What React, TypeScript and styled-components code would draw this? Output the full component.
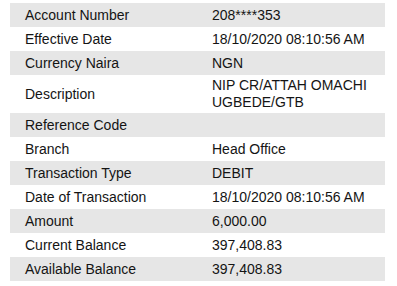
import styled, { createGlobalStyle } from 'styled-components'

const GlobalStyle = createGlobalStyle`
    body {
        margin: 0;
        background: #fff;
        font-family: 'Liberation Sans', Arial, sans-serif;
        color: #141414;
    }
`

type Detail = { label: string, value: string[] }

const details: Detail[] = [
    { label: 'Account Number', value: ['208****353'] },
    { label: 'Effective Date', value: ['18/10/2020 08:10:56 AM'] },
    { label: 'Currency Naira', value: ['NGN'] },
    { label: 'Description', value: ['NIP CR/ATTAH OMACHI', 'UGBEDE/GTB'] },
    { label: 'Reference Code', value: [] },
    { label: 'Branch', value: ['Head Office'] },
    { label: 'Transaction Type', value: ['DEBIT'] },
    { label: 'Date of Transaction', value: ['18/10/2020 08:10:56 AM'] },
    { label: 'Amount', value: ['6,000.00'] },
    { label: 'Current Balance', value: ['397,408.83'] },
    { label: 'Available Balance', value: ['397,408.83'] },
]

const Table = styled.div`
    display: flex;
    flex-direction: column;
    width: 375px;
    margin: 3px 0 0 10px;
    font-size: 14px;
`

const Row = styled.div<{ $striped: boolean }>`
    display: grid;
    grid-template-columns: 187px 1fr;
    align-items: center;
    min-height: 24px;
    padding: 2px 0;
    box-sizing: border-box;
    background: ${p => p.$striped ? '#e6e6e6' : 'transparent'};
`

const Label = styled.div`
    padding-left: 15px;
    line-height: 17px;
`

const Value = styled.div`
    padding-left: 15px;
    line-height: 17px;
`

export default function App() {
    return (
        <>
            <GlobalStyle />
            <Table>
                {details.map((d, i) => (
                    <Row key={d.label} $striped={i % 2 === 0}>
                        <Label>{d.label}</Label>
                        <Value>
                            {d.value.map(line => <div key={line}>{line}</div>)}
                        </Value>
                    </Row>
                ))}
            </Table>
        </>
    )
}
